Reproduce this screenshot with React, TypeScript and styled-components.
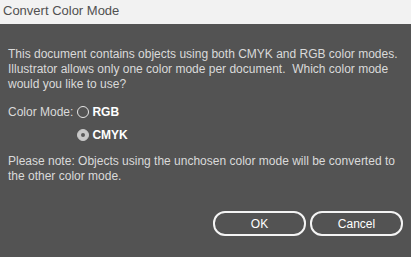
import styled, { createGlobalStyle } from 'styled-components';

const GlobalStyle = createGlobalStyle`
  html, body {
    margin: 0;
    padding: 0;
    background: #535353;
  }
  body {
    font-family: "Liberation Sans", Arial, sans-serif;
  }
`;

export default function App() {
  return (
    <Dialog>
      <GlobalStyle />
      <TitleBar>Convert Color Mode</TitleBar>
      <Body>
        <Message>
          This document contains objects using both CMYK and RGB color modes.
          Illustrator allows only one color mode per document.&nbsp; Which color mode
          would you like to use?
        </Message>
        <ModeGrid>
          <ModeLabel>Color Mode:</ModeLabel>
          <RadioOption>
            <Radio checked={false} />
            <OptionText>RGB</OptionText>
          </RadioOption>
          <span />
          <RadioOption>
            <Radio checked />
            <OptionText>CMYK</OptionText>
          </RadioOption>
        </ModeGrid>
        <Message>
          Please note: Objects using the unchosen color mode will be converted to
          the other color mode.
        </Message>
        <Buttons>
          <Button>OK</Button>
          <Button>Cancel</Button>
        </Buttons>
      </Body>
    </Dialog>
  );
}

const Dialog = styled.div`
  width: 411px;
  height: 257px;
  display: flex;
  flex-direction: column;
  background: #535353;
  overflow: hidden;
`;

const TitleBar = styled.div`
  height: 24px;
  flex-shrink: 0;
  background: #f2f2f2;
  color: #505050;
  font-size: 13px;
  line-height: 22px;
  padding-left: 3px;
`;

const Body = styled.div`
  flex: 1;
  display: flex;
  flex-direction: column;
  padding: 23px 8px 0 8px;
  color: #dadada;
  font-size: 12px;
`;

const Message = styled.p`
  margin: 0;
  line-height: 15px;
  max-width: 392px;
`;

const ModeGrid = styled.div`
  display: grid;
  grid-template-columns: auto auto;
  justify-content: start;
  column-gap: 4px;
  row-gap: 9px;
  margin: 13px 0 12px 0;
`;

const ModeLabel = styled.span`
  line-height: 14px;
`;

const RadioOption = styled.label`
  display: flex;
  align-items: center;
  gap: 3px;
  line-height: 14px;
`;

const Radio = styled.span<{ checked: boolean }>`
  width: 12px;
  height: 12px;
  box-sizing: border-box;
  border-radius: 50%;
  border: 1px solid ${(p) => (p.checked ? '#c8c8c8' : '#e6e6e6')};
  background: ${(p) => (p.checked ? '#c8c8c8' : 'transparent')};
  display: flex;
  align-items: center;
  justify-content: center;
  &::after {
    content: '';
    width: 4px;
    height: 4px;
    border-radius: 50%;
    background: ${(p) => (p.checked ? '#5a5a5a' : 'transparent')};
  }
`;

const OptionText = styled.span`
  color: #ffffff;
  font-weight: bold;
`;

const Buttons = styled.div`
  display: flex;
  justify-content: flex-end;
  gap: 4px;
  margin-top: 27px;
`;

const Button = styled.button`
  width: 93px;
  height: 25px;
  box-sizing: border-box;
  border: 2px solid #f4f4f4;
  border-radius: 12px;
  background: transparent;
  color: #ffffff;
  font-family: "Liberation Sans", Arial, sans-serif;
  font-size: 12px;
  padding: 0;
`;
